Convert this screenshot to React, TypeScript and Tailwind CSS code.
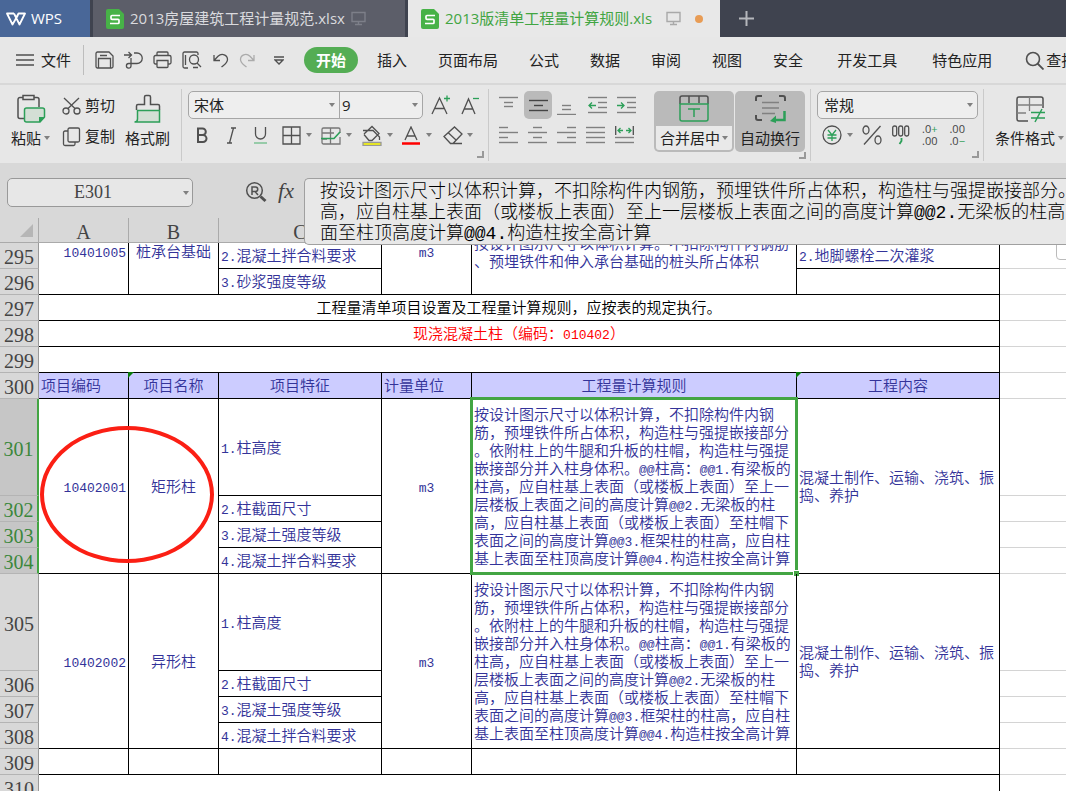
import React from 'react';
import clsx from 'clsx';

const MENU = ['插入', '页面布局', '公式', '数据', '审阅', '视图', '安全'];
const MENU_EXTRA = ['开发工具', '特色应用'];

const RULE_LINES = [
  '按设计图示尺寸以体积计算，不扣除构件内钢',
  '筋，预埋铁件所占体积，构造柱与强提嵌接部分',
  '。依附柱上的牛腿和升板的柱帽，构造柱与强提',
  '嵌接部分并入柱身体积。@@柱高：@@1.有梁板的',
  '柱高，应自柱基上表面（或楼板上表面）至上一',
  '层楼板上表面之间的高度计算@@2.无梁板的柱',
  '高，应自柱基上表面（或楼板上表面）至柱帽下',
  '表面之间的高度计算@@3.框架柱的柱高，应自柱',
  '基上表面至柱顶高度计算@@4.构造柱按全高计算',
];

const FORMULA = [
  '按设计图示尺寸以体积计算，不扣除构件内钢筋，预埋铁件所占体积，构造柱与强提嵌接部分。',
  '高，应自柱基上表面（或楼板上表面）至上一层楼板上表面之间的高度计算@@2.无梁板的柱高，',
  '面至柱顶高度计算@@4.构造柱按全高计算',
].join('\n');

const ITEMS = [
  { first: 301, code: '10402001', name: '矩形柱', active: true },
  { first: 305, code: '10402002', name: '异形柱', active: false },
];
const FEATURES = ['1.柱高度', '2.柱截面尺寸', '3.混凝土强度等级', '4.混凝土拌合料要求'];

// latin runs sit at half the width of a chinese character
function Mixed({ text }: { text: string }) {
  return (
    <>
      {text.split(/([\x21-\x7e]+)/).map((part, i) =>
        i % 2 ? <span key={i} className="text-[13px]">{part}</span> : part
      )}
    </>
  );
}

function Svg({ w, h, children, className }: { w: number; h: number; children: React.ReactNode; className?: string }) {
  return (
    <svg width={w} height={h} viewBox={`0 0 ${w} ${h}`} fill="none" stroke="#505050" strokeWidth="1.3" className={clsx('shrink-0', className)} aria-hidden="true">
      {children}
    </svg>
  );
}

function Caret({ className }: { className?: string }) {
  return (
    <Svg w={6} h={4} className={className}>
      <path d="M0 0h6L3 4z" fill="#808080" stroke="none" />
    </Svg>
  );
}

function Tool({ label, className, children }: { label: string; className?: string; children: React.ReactNode }) {
  return (
    <button type="button" aria-label={label} className={clsx('flex shrink-0 items-center justify-center', className)}>
      {children}
    </button>
  );
}

function Divider() {
  return <div className="h-[72px] w-px shrink-0 self-start bg-[#cacaca]" />;
}

function Corner() {
  return (
    <Svg w={7} h={7}>
      <path d="M6 0v6H0" stroke="#999" strokeWidth="2" />
    </Svg>
  );
}

function Monitor({ color }: { color: string }) {
  return (
    <Svg w={15} h={15}>
      <path d="M1 1.5h13v9H1zM7.5 10.5v3M4 13.5h7" stroke={color} strokeWidth="1.4" />
    </Svg>
  );
}

function SheetIcon() {
  return (
    <Svg w={18} h={20}>
      <path d="M2 0h11l5 5v13a2 2 0 0 1-2 2H2a2 2 0 0 1-2-2V2a2 2 0 0 1 2-2z" fill="#47b247" stroke="none" />
      <path d="M14 6.500H6a1 1 0 0 0-1 1v1.800a1 1 0 0 0 1 1h6a1 1 0 0 1 1 1V13.500a1 1 0 0 1-1 1H4" stroke="#fff" strokeWidth="1.700" />
    </Svg>
  );
}

function TitleBar() {
  return (
    <div className="flex h-[37px] shrink-0 bg-[#3f434f] text-[15px]">
      <button type="button" className="flex w-[90px] shrink-0 items-center gap-[5px] bg-[#496798] pl-[6px] text-white">
        <Svg w={20} h={14}>
          <path d="M8 1.500H1l5.500 11L12 3M8 1.500l5.500 11L19 1.500h-6.500L9.500 7" stroke="#fff" strokeWidth="1.800" strokeLinejoin="round" />
        </Svg>
        WPS
      </button>
      <div className="ml-[3px] flex w-[312px] shrink-0 items-center gap-[6px] bg-[#5c5e69] pl-[13px] text-[#dadade]">
        <SheetIcon />
        <span>2013房屋建筑工程计量规范.xlsx</span>
        <Monitor color="#7d7f89" />
      </div>
      <div className="ml-[3px] flex w-[312px] shrink-0 items-center bg-[#e8e8e8] pl-[13px] text-[#42a542]">
        <SheetIcon />
        <span className="ml-[6px] mr-[14px]">2013版清单工程量计算规则.xls</span>
        <Monitor color="#a9a9a9" />
        <span className="ml-[14px] size-2 rounded-full bg-[#e89c55]" />
      </div>
      <Tool label="新建" className="ml-[19px]">
        <Svg w={15} h={15}>
          <path d="M7.500 0v15M0 7.500h15" stroke="#b5b7bc" strokeWidth="2" />
        </Svg>
      </Tool>
    </div>
  );
}

function MenuBar() {
  return (
    <nav className="flex h-[48px] shrink-0 items-center overflow-hidden border-b-2 border-[#d8d8d8] text-[15px] text-[#222]">
      <button type="button" className="ml-4 flex shrink-0 items-center gap-[7px]">
        <Svg w={18} h={12}>
          <path d="M0 1h18M0 6h18M0 11h18" strokeWidth="1.300" />
        </Svg>
        文件
      </button>
      <div className="ml-3 mr-[11px] h-[30px] w-px shrink-0 bg-[#bdbdbd]" />
      <div className="flex shrink-0 items-center gap-[10px]">
        <Tool label="保存">
          <Svg w={19} h={18}>
            <path d="M1 2.500A1.500 1.500 0 0 1 2.500 1h11.500l4 4v10.500a1.500 1.500 0 0 1-1.500 1.500h-14A1.500 1.500 0 0 1 1 15.500zM3.500 17V7.500h12V17M5 4.500h7" />
          </Svg>
        </Tool>
        <Tool label="输出">
          <Svg w={19} h={18}>
            <path d="M0 4h7M4.500 1l3 3-3 3M10 2h3a5 5 0 0 1 0 10.500H7v2.500a2.300 2.300 0 1 1-2.300-2.500H7V7" />
          </Svg>
        </Tool>
        <Tool label="打印">
          <Svg w={19} h={18}>
            <path d="M4 4.500V2a1 1 0 0 1 1-1h9a1 1 0 0 1 1 1v2.500M4 13H2.500A1.500 1.500 0 0 1 1 11.500V6a1.500 1.500 0 0 1 1.500-1.500h14A1.500 1.500 0 0 1 18 6v5.500a1.500 1.500 0 0 1-1.500 1.500H15M4 9.500h11v6a1 1 0 0 1-1 1H5a1 1 0 0 1-1-1z" />
          </Svg>
        </Tool>
        <Tool label="打印预览">
          <Svg w={20} h={18}>
            <path d="M16 4V2.500A1.500 1.500 0 0 0 14.500 1h-12A1.500 1.500 0 0 0 1 2.500v13A1.500 1.500 0 0 0 2.500 17H6M3.500 4v10M11 16.500h5M15 12l4 4" />
            <circle cx="12" cy="8.500" r="4.500" />
          </Svg>
        </Tool>
        <Tool label="撤销">
          <Svg w={17} h={16}>
            <path d="M2 3v5.500h6M2 8.500l4-4.300C10 .5 15.500 3 15.500 7.500c0 3.500-3 5-6 7.500" />
          </Svg>
        </Tool>
        <Tool label="恢复">
          <Svg w={17} h={16}>
            <path d="M15 3v5.500H9M15 8.500l-4-4.300C7 .5 1.500 3 1.500 7.500c0 3.500 3 5 6 7.500" stroke="#ababab" />
          </Svg>
        </Tool>
        <Tool label="更多" className="ml-[8px]">
          <Svg w={10} h={9}>
            <path d="M0 1h10M1 4l4 4 4-4z" />
          </Svg>
        </Tool>
      </div>
      <button type="button" className="ml-5 h-[26px] w-[54px] shrink-0 rounded-full bg-[#54ad54] font-bold text-white">开始</button>
      <div className="ml-[19px] flex shrink-0 gap-[31px]">
        {MENU.map(m => <button type="button" key={m}>{m}</button>)}
      </div>
      <div className="ml-[34px] flex shrink-0 gap-[35px]">
        {MENU_EXTRA.map(m => <button type="button" key={m}>{m}</button>)}
      </div>
      <button type="button" className="ml-[33px] flex shrink-0 items-center gap-[2px]">
        <Svg w={19} h={19}>
          <circle cx="8" cy="8" r="6.500" strokeWidth="1.600" />
          <path d="M12.500 12.500l6 6" strokeWidth="1.800" />
        </Svg>
        查找
      </button>
    </nav>
  );
}

function ClipboardGroup() {
  return (
    <div className="flex w-[181px] shrink-0">
      <button type="button" className="flex w-[62px] shrink-0 flex-col items-start pl-[11px]">
        <Svg w={29} h={30} className="ml-[6px] mt-[5px]">
          <path d="M6 3.500H3A2 2 0 0 0 1 5.500v17a2 2 0 0 0 2 2h5M17 3.500h3a2 2 0 0 1 2 2V13M6 1.500h11v4H6z" strokeWidth="1.500" />
          <path d="M9.500 14h16a2 2 0 0 1 2 2v7l-4.500 5H9.500a2 2 0 0 1-2-2V16a2 2 0 0 1 2-2z" fill="#d3dfd5" stroke="#2c9f58" strokeWidth="1.500" />
          <path d="M27.500 23v1l-4.500 4h-1v-5z" fill="#2c9f58" stroke="none" />
        </Svg>
        <span className="mt-1 flex items-center gap-[3px] leading-[20px]">粘贴<Caret /></span>
      </button>
      <div className="flex w-[62px] shrink-0 flex-col gap-[10px] pt-[6px]">
        <button type="button" className="flex items-center gap-1 leading-[21px]">
          <Svg w={19} h={18}>
            <path d="M2 1l11.500 11M17 1L5.500 12" />
            <circle cx="4" cy="14" r="3" />
            <circle cx="15" cy="14" r="3" />
          </Svg>
          剪切
        </button>
        <button type="button" className="flex items-center gap-1 leading-[21px]">
          <Svg w={19} h={20}>
            <path d="M7.500 1H16a1.500 1.500 0 0 1 1.500 1.500v11A1.500 1.500 0 0 1 16 15H7.500A1.500 1.500 0 0 1 6 13.500v-11A1.500 1.500 0 0 1 7.500 1zM6 4H3a1.500 1.500 0 0 0-1.500 1.500V17A1.500 1.500 0 0 0 3 18.500h8.500A1.500 1.500 0 0 0 13 17v-2" />
          </Svg>
          复制
        </button>
      </div>
      <button type="button" className="ml-[1px] flex flex-col items-center">
        <Svg w={27} h={30} className="mt-[5px]">
          <path d="M2.500 16v-4a1.500 1.500 0 0 1 1.500-1.500h6.500V3a1.500 1.500 0 0 1 1.500-1.500h3A1.500 1.500 0 0 1 16.500 3v7.500H24a1.500 1.500 0 0 1 1.500 1.500v4" strokeWidth="1.500" />
          <path d="M3.500 16.500h22V28H.5c2 0 3-1 3-3z" fill="#d3dfd5" stroke="#2c9f58" strokeWidth="1.500" />
        </Svg>
        <span className="mt-1 leading-[20px]">格式刷</span>
      </button>
    </div>
  );
}

function FontGroup() {
  return (
    <div className="flex w-[306px] shrink-0 flex-col pl-[6px] pt-[2px]">
      <div className="flex items-center">
        <div className="flex h-[28px] w-[235px] shrink-0 overflow-hidden rounded-[5px] border border-[#a6a6a6] bg-[#eee]">
          <label className="relative flex w-[151px] items-center border-r border-[#a6a6a6]">
            <select aria-label="字体" className="size-full appearance-none pl-[5px] outline-none"><option>宋体</option></select>
            <Caret className="absolute right-1" />
          </label>
          <label className="relative flex flex-1 items-center">
            <select aria-label="字号" className="size-full appearance-none pl-[2px] outline-none"><option>9</option></select>
            <Caret className="absolute right-1" />
          </label>
        </div>
        <Tool label="增大字号" className="ml-2">
          <Svg w={20} h={20}>
            <path d="M1 19L8.500 3 16 19M3.500 13.500h10" />
            <path d="M13 3.500h6M16 .5v6" stroke="#2c9f58" />
          </Svg>
        </Tool>
        <Tool label="减小字号" className="ml-[10px]">
          <Svg w={18} h={20}>
            <path d="M1 19L7.500 4 14 19M3.500 14h8" />
            <path d="M12 3.500h6" stroke="#2c9f58" />
          </Svg>
        </Tool>
      </div>
      <div className="mt-[4px] flex h-[24px] items-center">
        <Tool label="加粗" className="w-7">
          <Svg w={12} h={17}>
            <path d="M2 1.500h4.500a3.300 3.300 0 0 1 0 6.600H2zM2 8.100h5a3.500 3.500 0 0 1 0 7H2z" strokeWidth="2" />
          </Svg>
        </Tool>
        <Tool label="倾斜" className="w-[30px]">
          <Svg w={9} h={17}>
            <path d="M4 1h5M0 16h5M6.500 1l-4 15" />
          </Svg>
        </Tool>
        <Tool label="下划线" className="w-[28px]">
          <Svg w={15} h={17}>
            <path d="M2.500 0v7a5 5 0 0 0 10 0V0" />
            <path d="M1 16h13" stroke="#7cc295" strokeWidth="1.500" />
          </Svg>
        </Tool>
        <Tool label="边框" className="ml-2 gap-[5px]">
          <Svg w={19} h={19}>
            <path d="M1 1h17v17H1zM9.500 1v17M1 9.500h17" />
          </Svg>
          <Caret />
        </Tool>
        <Tool label="绘图边框" className="ml-[9px] gap-[5px]">
          <Svg w={20} h={19}>
            <path d="M17 18H2.500A1.500 1.500 0 0 1 1 16.500v-13A1.500 1.500 0 0 1 2.500 2h15A1.500 1.500 0 0 1 19 3.500V7M19 11v7H15M1 7h12M9.500 2v16M1 13h5" stroke="#777" />
            <path d="M0 12.500h13L19 6" stroke="#2c9f58" strokeWidth="1.600" />
          </Svg>
          <Caret />
        </Tool>
        <Tool label="填充颜色" className="ml-[10px] gap-[5px]">
          <Svg w={20} h={21}>
            <path d="M2 9l8-7.500 7 7-7 7H7L2 9.500M1 5.500h10l6.500 6.500v3" />
            <path d="M1 17.500h18v3H1z" fill="#ff0" stroke="#999" />
          </Svg>
          <Caret />
        </Tool>
        <Tool label="字体颜色" className="ml-[8px] gap-[5px]">
          <Svg w={20} h={19}>
            <path d="M4 14L10 1l6 13M6 10h8" />
            <path d="M1 17.500h18" stroke="red" strokeWidth="2.500" />
          </Svg>
          <Caret />
        </Tool>
        <Tool label="清除" className="ml-[11px] gap-[4px]">
          <Svg w={20} h={19}>
            <path d="M1 10.500L11.500 1 19 8l-9 9.500H7.500zM5 6.500l8 7.500M7.500 17.500H19" />
          </Svg>
          <Caret />
        </Tool>
      </div>
      <div className="flex justify-end pr-[4px] pt-[4px]"><Corner /></div>
    </div>
  );
}

// three or four bars, each given as x, y, width
function Bars({ bars, children, dark }: { bars: number[][]; children?: React.ReactNode; dark?: boolean }) {
  return (
    <Svg w={19} h={19}>
      {bars.map(([x, y, w], i) => (
        <path key={i} d={`M${x} ${y - 0.5}h${w}`} stroke={dark ? '#444' : '#808080'} strokeWidth="1.400" />
      ))}
      {children}
    </Svg>
  );
}

function AlignGroup() {
  return (
    <div className="w-[161px] shrink-0 pl-[5px] pt-[2px]">
      <div className="flex h-[28px] items-center">
        <Tool label="顶端对齐" className="h-7 w-[29px]"><Bars bars={[[0, 2, 19], [5, 7, 9], [5, 11, 9]]} /></Tool>
        <Tool label="垂直居中" className="ml-px h-7 w-[28px] rounded-[5px] bg-[#bababa]"><Bars dark bars={[[0, 5, 19], [5, 10, 9], [0, 15, 19]]} /></Tool>
        <Tool label="底端对齐" className="h-7 w-[29px]"><Bars bars={[[5, 10, 9], [5, 14, 9], [0, 19, 19]]} /></Tool>
        <Tool label="减少缩进量" className="ml-[2px] h-7 w-[29px]">
          <Bars bars={[[0, 2, 19], [10, 7, 9], [10, 12, 9], [0, 17, 19]]}><path d="M8 9.500H1M4 6.500l-3 3 3 3" stroke="#2c9f58" /></Bars>
        </Tool>
        <Tool label="增加缩进量" className="h-7 w-[29px]">
          <Bars bars={[[0, 2, 19], [10, 7, 9], [10, 12, 9], [0, 17, 19]]}><path d="M0 9.500h7M4 6.500l3 3-3 3" stroke="#2c9f58" /></Bars>
        </Tool>
      </div>
      <div className="mt-[4px] flex h-6 items-center">
        <Tool label="左对齐" className="w-[29px]"><Bars bars={[[0, 2, 9], [0, 7, 19], [0, 12, 9], [0, 17, 19]]} /></Tool>
        <Tool label="水平居中" className="w-[29px]"><Bars bars={[[5, 2, 9], [0, 7, 19], [5, 12, 9], [0, 17, 19]]} /></Tool>
        <Tool label="右对齐" className="w-[29px]"><Bars bars={[[10, 2, 9], [0, 7, 19], [10, 12, 9], [0, 17, 19]]} /></Tool>
        <Tool label="两端对齐" className="w-[29px]"><Bars bars={[[0, 2, 19], [0, 7, 19], [0, 12, 19], [0, 17, 19]]} /></Tool>
        <Tool label="分散对齐" className="w-[29px]">
          <Bars bars={[[0, 12, 19], [0, 17, 19]]}>
            <path d="M.7 0v9M18.300 0v9" />
            <path d="M8 4.500H3M5.500 2L3 4.500 5.500 7M11 4.500h5M13.500 2L16 4.500 13.500 7" stroke="#2c9f58" />
          </Bars>
        </Tool>
      </div>
    </div>
  );
}

function MergeGroup() {
  return (
    <div className="flex w-[160px] shrink-0 flex-col pl-1 pt-[2px]">
      <div className="flex h-[61px] gap-[1px]">
        <button type="button" className="flex w-[80px] flex-col items-center rounded-[5px] bg-[#bababa] p-[2px]">
          <Svg w={30} h={27} className="mb-[4px] mt-[2px]">
            <path d="M1 9V3a2 2 0 0 1 2-2h24a2 2 0 0 1 2 2v6M10 1v7M20 1v7" strokeWidth="1.500" />
            <path d="M1 9h28v15a2 2 0 0 1-2 2H3a2 2 0 0 1-2-2zM9 14h12M15 14v8" stroke="#2c9f58" strokeWidth="1.500" />
          </Svg>
          <span className="flex w-full flex-1 items-center justify-center gap-[2px] rounded-b-[3px] bg-[#e9e9e9]">合并居中<Caret /></span>
        </button>
        <button type="button" className="flex w-[70px] flex-col items-center rounded-[5px] bg-[#bababa] p-[2px]">
          <Svg w={31} h={28} className="mb-[3px] mt-[2px]">
            <path d="M1 6V3a2 2 0 0 1 2-2h4M24 1h4a2 2 0 0 1 2 2v3M1 20v3a2 2 0 0 0 2 2h4" strokeWidth="2" />
            <path d="M7 7.500h17M7 13h17M7 18.500h13" stroke="#808080" strokeWidth="1.500" />
            <path d="M29.500 16v9H20" stroke="#2c9f58" strokeWidth="2.500" />
            <path d="M21 20.500V28l-6-2z" fill="#2c9f58" stroke="none" />
          </Svg>
          <span className="flex flex-1 items-center">自动换行</span>
        </button>
      </div>
      <div className="flex justify-end pr-[4px]"><Corner /></div>
    </div>
  );
}

function NumberGroup() {
  return (
    <div className="w-[172px] shrink-0 pl-[6px] pt-[2px]">
      <label className="relative flex h-[28px] w-[161px] items-center rounded-[5px] border border-[#a6a6a6] bg-[#eee]">
        <select aria-label="数字格式" className="size-full appearance-none pl-[6px] outline-none"><option>常规</option></select>
        <Caret className="absolute right-1" />
      </label>
      <div className="mt-[4px] flex h-6 items-center">
        <Tool label="货币" className="ml-[5px] gap-[5px]">
          <Svg w={20} h={20}>
            <circle cx="10" cy="10" r="9" />
            <path d="M6 5l4 5 4-5M10 10v6M5.500 10h9M5.500 13h9" stroke="#2c9f58" />
          </Svg>
          <Caret />
        </Tool>
        <Tool label="百分比" className="ml-[9px]">
          <Svg w={20} h={20}>
            <ellipse cx="4" cy="5" rx="3" ry="4" />
            <ellipse cx="16" cy="15" rx="3" ry="4" />
            <path d="M18.500 1L2 19.500" />
          </Svg>
        </Tool>
        <Tool label="千位分隔" className="ml-[10px]">
          <Svg w={19} h={20}>
            <rect x=".7" y="1" width="4" height="10" rx="1.800" />
            <rect x="6.700" y="1" width="4" height="10" rx="1.800" />
            <rect x="12.700" y="1" width="4" height="10" rx="1.800" />
            <path d="M9.500 13v3l-2 3" stroke="#2c9f58" strokeWidth="1.800" />
          </Svg>
        </Tool>
        <Tool label="增加小数位数" className="ml-[11px]">
          <span className="flex flex-col text-left text-[11px] leading-[12px] text-[#444]"><span>.0<span className="text-[#2c9f58]">+</span></span><span>.00</span></span>
        </Tool>
        <Tool label="减少小数位数" className="ml-[12px]">
          <span className="flex flex-col text-left text-[11px] leading-[12px] text-[#444]"><span>.00</span><span>.0<span className="text-[#2c9f58]">−</span></span></span>
        </Tool>
      </div>
      <div className="flex justify-end pr-[4px] pt-[4px]"><Corner /></div>
    </div>
  );
}

function Ribbon() {
  return (
    <div className="flex h-[78px] shrink-0 overflow-hidden pt-1 text-[15px] text-[#222]">
      <ClipboardGroup />
      <Divider />
      <FontGroup />
      <Divider />
      <AlignGroup />
      <MergeGroup />
      <Divider />
      <NumberGroup />
      <Divider />
      <button type="button" className="ml-[11px] flex shrink-0 flex-col items-start">
        <Svg w={29} h={28} className="ml-[21px] mt-[7px]">
          <path d="M12 25H3a2 2 0 0 1-2-2V3a2 2 0 0 1 2-2h22a2 2 0 0 1 2 2v9" strokeWidth="1.500" />
          <path d="M1 9h26M13.500 1v14M1 17h9" stroke="#808080" />
          <path d="M15 16.500h14M15 22h14M26 13l-7 13" stroke="#2c9f58" strokeWidth="1.500" />
        </Svg>
        <span className="mt-1 flex items-center gap-[3px] leading-[20px]">条件格式<Caret /></span>
      </button>
    </div>
  );
}

function FormulaBar() {
  return (
    <div className="relative z-10 flex h-[55px] shrink-0 items-start pl-[7px] pt-[15px]">
      <div className="relative flex h-[29px] w-[186px] shrink-0 items-center">
        <input aria-label="名称框" defaultValue="E301" className="size-full rounded-[5px] border border-[#999] bg-[#e7e7e7] pr-[14px] text-center font-['Liberation_Serif',serif] text-[18px] text-[#444] outline-none" />
        <Tool label="定位" className="absolute right-1 h-5"><Caret /></Tool>
      </div>
      <Tool label="查找" className="ml-[52px] mt-[3px]">
        <Svg w={22} h={22}>
          <circle cx="9.500" cy="9.500" r="7.800" strokeWidth="1.500" />
          <path d="M7 14V6h3.500a2 2 0 0 1 0 4.500H7M10 10.500l3 3.500" strokeWidth="1.500" />
          <path d="M15.500 15.500l5 4.500" strokeWidth="3" />
        </Svg>
      </Tool>
      <Tool label="插入函数" className="ml-[9px] w-5 font-['Liberation_Serif',serif] text-[22px] leading-[26px] italic text-[#444]">fx</Tool>
      <textarea
        aria-label="编辑栏"
        wrap="off"
        defaultValue={FORMULA}
        className="ml-2 h-[67px] min-w-0 flex-1 resize-none overflow-hidden rounded-l-[5px] border border-r-0 border-[#a0a0a0] bg-[#e8e8e8] pl-[15px] pt-[3px] font-['Liberation_Mono','Noto_Sans_CJK_SC',monospace] text-[18px] leading-[21px] font-light text-[#000] outline-none"
      />
    </div>
  );
}

function RowHead({ n, active, h = 'h-[26px]' }: { n: number; active?: boolean; h?: string }) {
  return (
    <th
      scope="row"
      className={clsx(
        "border-b border-b-[#b4b4b4] pt-[3px] text-center font-['Liberation_Serif',serif] text-[20px] leading-[20px] font-normal",
        h,
        active ? 'border-r-2 border-r-[#43a543] bg-[#c6c6c6] text-[#3b873b]' : 'border-r border-r-[#999] bg-[#d8d8d8] text-[#444]'
      )}
    >
      {n}
    </th>
  );
}

const CELL = 'border-r border-b border-black pt-[5px]';
const CLIPPED = 'border-r border-b border-black pt-[2px] align-top';
const BLANK = 'border-b border-[#d4d4d4]';
const HEAD = 'relative border-r border-b border-black bg-[#ccccff] pt-[5px]';

function ErrorMark() {
  return (
    <svg width="6" height="6" className="absolute -left-px -top-px" aria-hidden="true">
      <path d="M0 0h6L0 6z" fill="#0a7a0a" />
    </svg>
  );
}

function Sheet() {
  return (
    <div className="relative flex-1 overflow-hidden bg-white">
      <table className="w-full table-fixed border-separate border-spacing-0 whitespace-nowrap font-['Liberation_Mono','Noto_Sans_CJK_SC',monospace] text-[15px] leading-[18px] font-[350] text-[#333399]">
        <colgroup>
          <col className="w-[39px]" />
          <col className="w-[90px]" />
          <col className="w-[90px]" />
          <col className="w-[163px]" />
          <col className="w-[90px]" />
          <col className="w-[325px]" />
          <col className="w-[203px]" />
          <col />
        </colgroup>
        <thead>
          <tr className="bg-[#d8d8d8] font-['Liberation_Serif',serif] text-[20px] text-[#444]">
            <th aria-label="全选" className="h-[25px] border-r border-b border-[#aaa]">
              <Svg w={13} h={13} className="ml-5">
                <path d="M13 0v13H0z" fill="#b6b6b6" stroke="none" />
              </Svg>
            </th>
            {['A', 'B', 'C', 'D', 'E', 'F', 'G'].map(c => (
              <th key={c} scope="col" className="border-r border-b border-[#aaa] pt-[3px] font-normal">{c}</th>
            ))}
          </tr>
        </thead>
        <tbody>
          <tr>
            <RowHead n={295} />
            <td rowSpan={2} className={clsx(CLIPPED, 'pr-[2px] text-right text-[13px]')}>10401005</td>
            <td rowSpan={2} className={clsx(CLIPPED, 'text-center')}>桩承台基础</td>
            <td className={clsx(CELL, 'pl-[2px]')}><Mixed text="2.混凝土拌合料要求" /></td>
            <td rowSpan={2} className={clsx(CLIPPED, 'text-center')}><Mixed text="m3" /></td>
            <td rowSpan={2} className={clsx(CLIPPED, 'pl-[2px]')}>
              <div className="-mt-2">按设计图示尺寸以体积计算。不扣除构件内钢筋</div>
              <div>、预埋铁件和伸入承台基础的桩头所占体积</div>
            </td>
            <td className={clsx(CELL, 'pl-[2px]')}><Mixed text="2.地脚螺栓二次灌浆" /></td>
            <td className={BLANK} />
          </tr>
          <tr>
            <RowHead n={296} />
            <td className={clsx(CELL, 'pl-[2px]')}><Mixed text="3.砂浆强度等级" /></td>
            <td className={CELL} />
            <td className={BLANK} />
          </tr>
          <tr>
            <RowHead n={297} />
            <td colSpan={6} className={clsx(CELL, 'text-center text-black')}>工程量清单项目设置及工程量计算规则，应按表的规定执行。</td>
            <td className={BLANK} />
          </tr>
          <tr>
            <RowHead n={298} />
            <td colSpan={6} className={clsx(CELL, 'text-center text-[#ff0000]')}><Mixed text="现浇混凝土柱（编码：010402）" /></td>
            <td className={BLANK} />
          </tr>
          <tr>
            <RowHead n={299} />
            <td colSpan={6} className={CELL} />
            <td className={BLANK} />
          </tr>
          <tr>
            <RowHead n={300} />
            <td className={clsx(HEAD, 'pl-[2px]')}>项目编码</td>
            <td className={clsx(HEAD, 'text-center')}><ErrorMark />项目名称</td>
            <td className={clsx(HEAD, 'text-center')}>项目特征</td>
            <td className={clsx(HEAD, 'pl-[2px]')}>计量单位</td>
            <td className={clsx(HEAD, 'text-center')}>工程量计算规则</td>
            <td className={clsx(HEAD, 'text-center')}><ErrorMark />工程内容</td>
            <td className={BLANK} />
          </tr>
          {ITEMS.map(item =>
            FEATURES.map((feature, i) => (
              <tr key={item.first + i}>
                <RowHead n={item.first + i} active={item.active} h={i === 0 ? 'h-[97px]' : 'h-[26px]'} />
                {i === 0 && <td rowSpan={4} className={clsx(CELL, 'pr-[2px] text-right text-[13px]')}>{item.code}</td>}
                {i === 0 && <td rowSpan={4} className={clsx(CELL, 'text-center')}>{item.name}</td>}
                <td className={clsx(CELL, 'pl-[2px]')}><Mixed text={feature} /></td>
                {i === 0 && (
                  <>
                    <td rowSpan={4} className={clsx(CELL, 'text-center')}><Mixed text="m3" /></td>
                    <td rowSpan={4} className={clsx(CELL, 'relative pl-[2px]')}>
                      {RULE_LINES.map(line => <div key={line}><Mixed text={line} /></div>)}
                      {item.active && (
                        <div className="absolute -inset-[2px] border-3 border-[#43a543]">
                          <div className="absolute -bottom-1 -right-1 size-[6px] border-l border-t border-white bg-[#43a543]" />
                        </div>
                      )}
                    </td>
                    <td rowSpan={4} className={clsx(CELL, 'pl-[2px]')}>
                      <div>混凝土制作、运输、浇筑、振</div>
                      <div>捣、养护</div>
                    </td>
                  </>
                )}
                <td className={BLANK} />
              </tr>
            ))
          )}
          <tr>
            <RowHead n={309} />
            {[0, 1, 2, 3, 4, 5].map(i => <td key={i} className={CELL} />)}
            <td className={BLANK} />
          </tr>
          <tr>
            <RowHead n={310} />
            <td colSpan={6} className={CELL} />
            <td className={BLANK} />
          </tr>
        </tbody>
      </table>
      {/* red pen circle round the item code */}
      <div className="absolute left-10 top-[208px] h-[137px] w-[174px] rounded-[50%] border-4 border-[#fb1f14]" />
      {/* collapsed side panel handle */}
      <div className="absolute left-[1056px] top-[20px] h-[22px] w-[30px] rounded-[4px] border border-[#bbb] bg-white" />
    </div>
  );
}

export default function App() {
  return (
    <div className="flex h-screen flex-col overflow-hidden bg-[#e7e7e7] font-['Open_Sans','Noto_Sans_CJK_SC',sans-serif] whitespace-nowrap">
      <TitleBar />
      <MenuBar />
      <Ribbon />
      <div className="flex min-h-0 flex-1 flex-col bg-[#d8d8d8]">
        <FormulaBar />
        <Sheet />
      </div>
    </div>
  );
}
